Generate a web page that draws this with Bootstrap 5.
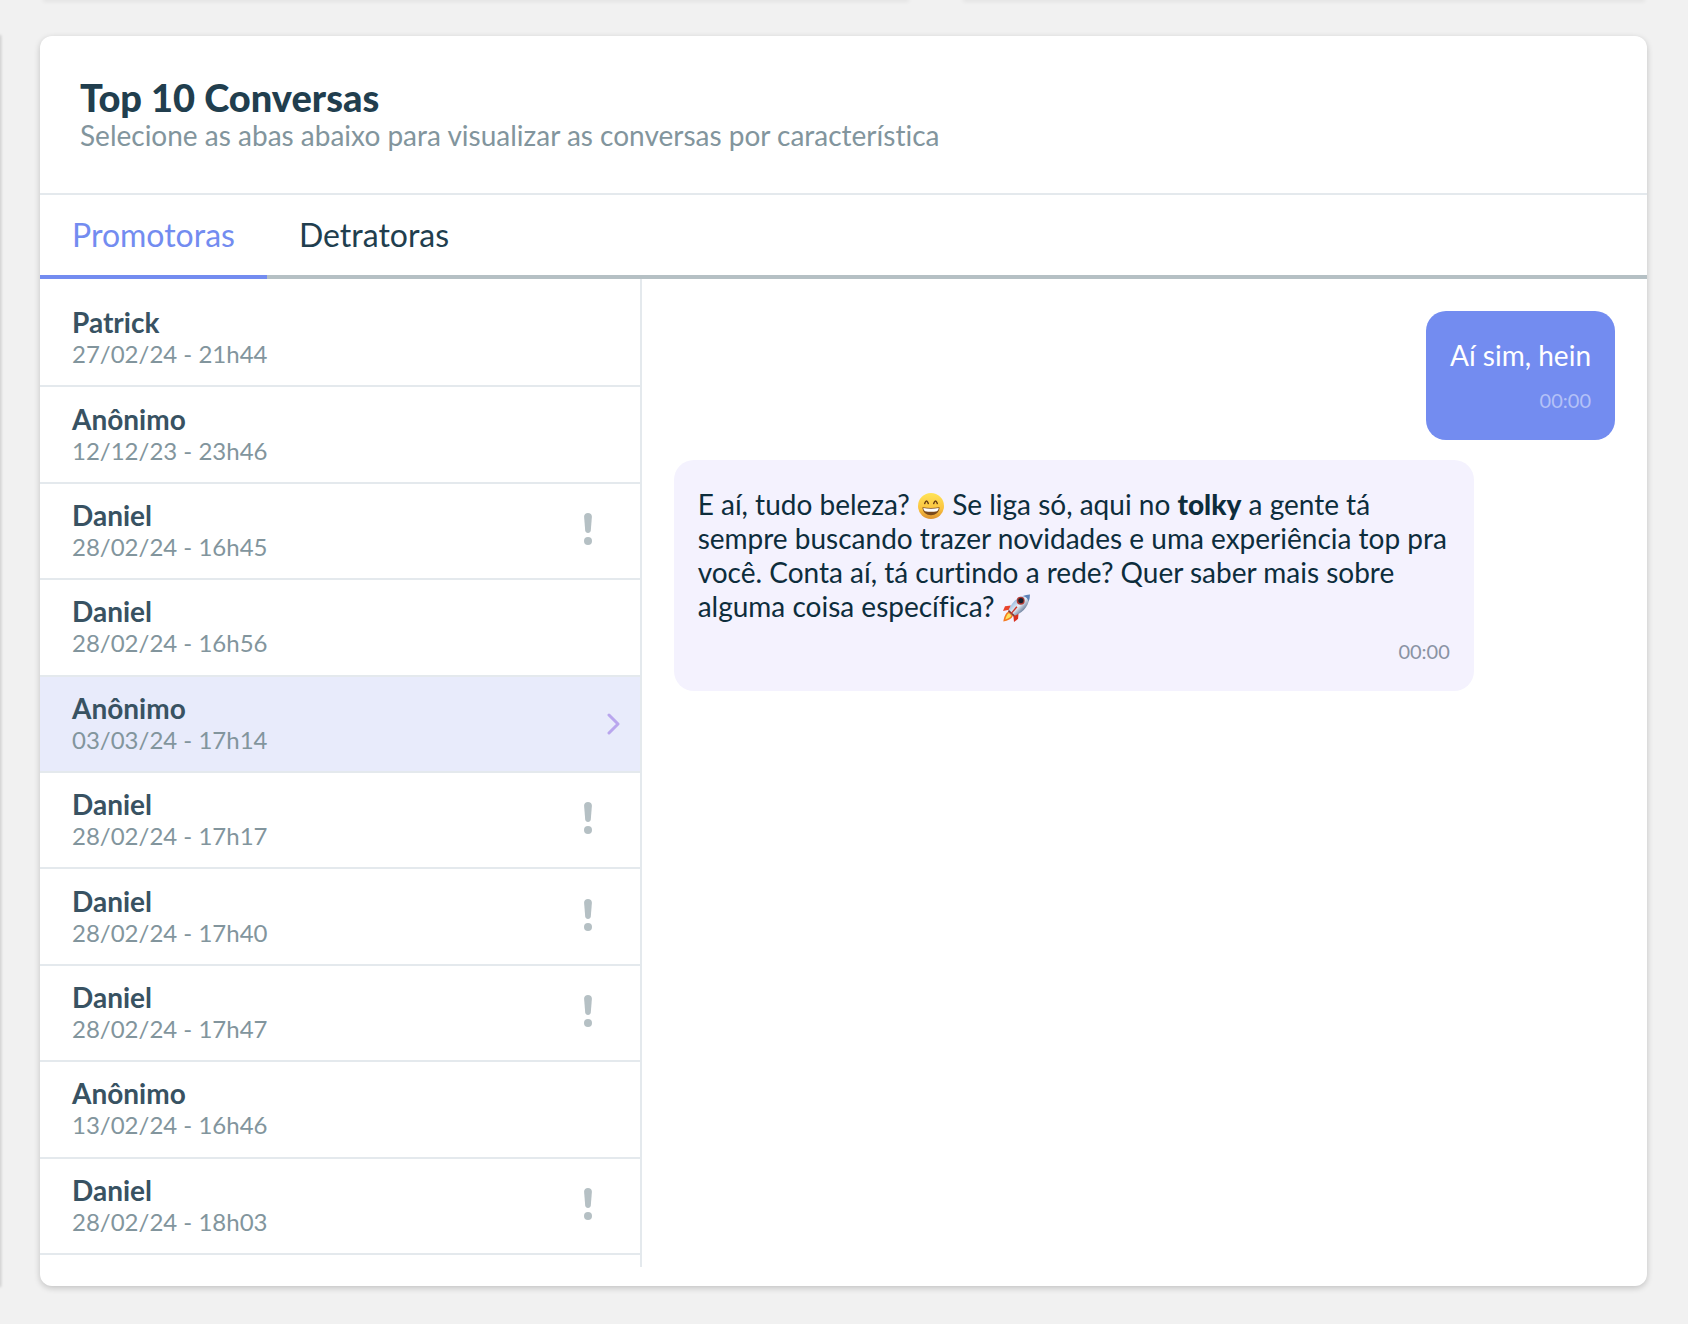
<!DOCTYPE html>
<html lang="pt-BR">
<head>
<meta charset="utf-8">
<meta name="viewport" content="width=device-width, initial-scale=1">
<title>Top 10 Conversas</title>
<link href="https://cdn.jsdelivr.net/npm/bootstrap@5.3.0/dist/css/bootstrap.min.css" rel="stylesheet">
<style>
  :root { --ink: #213e4e; --muted: #82959d; --line: #e4e9ed; --rule: #b5c0c4; --accent: #738cf0; --lift: 0 2px 6px rgba(0,0,0,.2); }
  body { font-family: Lato, "Open Sans", sans-serif; font-variant-ligatures: none; background: #f1f1f1; color: var(--ink); overflow-x: hidden; }
  /* edges of the neighbouring dashboard cards */
  .edge-row { gap: 56px; padding: 0 44px; }
  .edge-row div { height: 0; box-shadow: 0 0 4px 1px rgba(0,0,0,.12); }
  .edge-wide { flex: 0 0 54%; }
  .edge-side { width: 0; box-shadow: 0 0 3px 1px rgba(0,0,0,.2); }
  .board { padding: 36px 0 38px; }
  .panel-card { margin: 0 41px 0 40px; border: 0; border-radius: 12px; box-shadow: var(--lift); }
  .panel-head { padding: 40px 40px 41px; border-bottom: 2px solid var(--line); }
  .panel-title { font-size: 38px; line-height: 42px; font-weight: 900; }
  .panel-sub { font-size: 28px; line-height: 34px; color: var(--muted); }
  .tab-bar { border-bottom: 4px solid var(--rule); }
  .tab-bar .nav-link { font-size: 32px; line-height: 40px; padding: 20px 32px; color: var(--ink); border: 0; border-bottom: 4px solid transparent; border-radius: 0; margin-bottom: -4px; }
  .tab-bar .nav-link.active { color: var(--accent); border-bottom-color: var(--accent); background: none; }
  .split-pane { margin-bottom: 19px; }
  .talk-list { flex: 0 0 calc(37.5% - 1px); padding: 12px 0; border-right: 2px solid var(--line); }
  .talk-row { padding: 15px 20px 15px 32px; border: 0; border-bottom: 2px solid var(--line); background: none; }
  .talk-row.active { background: #e8ebfb; }
  .talk-name { font-size: 28px; line-height: 32px; font-weight: 700; color: #385262; }
  .talk-date { font-size: 24px; line-height: 32px; color: var(--muted); }
  .icon-alert { margin-right: 28px; }
  .chat-pane { padding: 32px; gap: 20px; }
  .bubble { max-width: 85%; padding: 27px 24px 28px; border-radius: 20px; font-size: 28px; line-height: 34px; background: #f4f2fe; color: #0d2d3c; }
  .bubble strong { font-weight: 900; }
  .bubble-user { background: var(--accent); color: #fff; }
  .bubble time { font-size: 20px; line-height: 24px; margin-top: 16px; color: #8a93a4; }
  .bubble-user time { color: #b4c1f7; }
  .emoji { width: 28px; height: 28px; vertical-align: -5px; }
</style>
</head>
<body class="d-flex flex-column min-vh-100">
<div class="edge-row d-flex"><div class="edge-wide"></div><div class="flex-fill"></div></div>
<main class="board d-flex flex-fill">
  <div class="edge-side"></div>
  <section class="panel-card card flex-fill">
    <header class="panel-head">
      <h1 class="panel-title m-0">Top 10 Conversas</h1>
      <p class="panel-sub m-0">Selecione as abas abaixo para visualizar as conversas por característica</p>
    </header>
    <nav class="tab-bar nav">
      <a class="nav-link active" href="#promotoras" aria-current="page">Promotoras</a>
      <a class="nav-link" href="#detratoras">Detratoras</a>
    </nav>
    <div class="split-pane d-flex flex-fill">
      <div class="talk-list d-flex flex-column">
        <button type="button" class="talk-row d-flex flex-fill align-items-center text-start"><span class="flex-fill"><span class="talk-name d-block">Patrick</span><span class="talk-date d-block">27/02/24 - 21h44</span></span></button>
        <button type="button" class="talk-row d-flex flex-fill align-items-center text-start"><span class="flex-fill"><span class="talk-name d-block">Anônimo</span><span class="talk-date d-block">12/12/23 - 23h46</span></span></button>
        <button type="button" class="talk-row d-flex flex-fill align-items-center text-start"><span class="flex-fill"><span class="talk-name d-block">Daniel</span><span class="talk-date d-block">28/02/24 - 16h45</span></span><svg class="icon-alert" width="8" height="36" viewBox="0 0 8 36" aria-hidden="true"><use href="#alert"/></svg></button>
        <button type="button" class="talk-row d-flex flex-fill align-items-center text-start"><span class="flex-fill"><span class="talk-name d-block">Daniel</span><span class="talk-date d-block">28/02/24 - 16h56</span></span></button>
        <button type="button" class="talk-row active d-flex flex-fill align-items-center text-start"><span class="flex-fill"><span class="talk-name d-block">Anônimo</span><span class="talk-date d-block">03/03/24 - 17h14</span></span><svg width="13" height="22" viewBox="0 0 13 22" fill="none" stroke="#b9a6ee" stroke-width="3" stroke-linecap="round" stroke-linejoin="round" aria-hidden="true"><path d="M2 2l9 9-9 9"/></svg></button>
        <button type="button" class="talk-row d-flex flex-fill align-items-center text-start"><span class="flex-fill"><span class="talk-name d-block">Daniel</span><span class="talk-date d-block">28/02/24 - 17h17</span></span><svg class="icon-alert" width="8" height="36" viewBox="0 0 8 36" aria-hidden="true"><use href="#alert"/></svg></button>
        <button type="button" class="talk-row d-flex flex-fill align-items-center text-start"><span class="flex-fill"><span class="talk-name d-block">Daniel</span><span class="talk-date d-block">28/02/24 - 17h40</span></span><svg class="icon-alert" width="8" height="36" viewBox="0 0 8 36" aria-hidden="true"><use href="#alert"/></svg></button>
        <button type="button" class="talk-row d-flex flex-fill align-items-center text-start"><span class="flex-fill"><span class="talk-name d-block">Daniel</span><span class="talk-date d-block">28/02/24 - 17h47</span></span><svg class="icon-alert" width="8" height="36" viewBox="0 0 8 36" aria-hidden="true"><use href="#alert"/></svg></button>
        <button type="button" class="talk-row d-flex flex-fill align-items-center text-start"><span class="flex-fill"><span class="talk-name d-block">Anônimo</span><span class="talk-date d-block">13/02/24 - 16h46</span></span></button>
        <button type="button" class="talk-row d-flex flex-fill align-items-center text-start"><span class="flex-fill"><span class="talk-name d-block">Daniel</span><span class="talk-date d-block">28/02/24 - 18h03</span></span><svg class="icon-alert" width="8" height="36" viewBox="0 0 8 36" aria-hidden="true"><use href="#alert"/></svg></button>
      </div>
      <div class="chat-pane d-flex flex-column flex-fill align-items-start">
        <div class="bubble bubble-user align-self-end">Aí sim, hein<time class="d-block text-end">00:00</time></div>
        <div class="bubble">E aí, tudo beleza?
          <svg class="emoji" viewBox="0 0 28 28" role="img" aria-label="sorriso"><circle cx="14" cy="14" r="13" fill="url(#face)"/><path d="M7.700 11.500q1.800-5 3.600 0M16.700 11.500q1.800-5 3.600 0" fill="none" stroke="#6b3f12" stroke-width="1.500" stroke-linecap="round"/><path d="M5.500 15.200q8.500 1.600 17 0c0 5-3.700 8-8.500 8s-8.500-3-8.500-8z" fill="#7b4a1c"/><path d="M6.300 16q7.700 1.400 15.400 0-.2 2.600-1.700 3.200-6 1-12 0-1.500-.6-1.700-3.200z" fill="#fff"/></svg>
          Se liga só, aqui no <strong>tolky</strong> a gente tá sempre buscando trazer novidades e uma experiência top pra você. Conta aí, tá curtindo a rede? Quer saber mais sobre alguma coisa específica?
          <svg class="emoji" viewBox="0 0 28 28" role="img" aria-label="foguete"><path d="M9 11.500L3 12.200 1 17l6-1.300z" fill="#e8432c"/><path d="M16.500 19l-.4 5.800L12 28l-.6-6z" fill="#d9301f"/><path d="M6.500 17.500C3.500 19 2 23 1.300 27.500 6 26.800 9.500 25 11 21.800z" fill="#f47a1f"/><path d="M7 19c-2 1.300-3 4-3.700 6.500C6 25 8.300 23.600 9.400 21.600z" fill="#ffe25a"/><path d="M6.300 17.500C9 8 16 1.500 28 .5 27.500 12 20.500 19.300 11.300 22.300z" fill="url(#hull)"/><path d="M21 1.900Q24.300.7 28 .5q-.2 3.800-1.300 7Q25.500 3.300 21 1.900z" fill="#5d83b8"/><path d="M5.800 17.300l5.700 5.300 1.500-1-6-5.700z" fill="#8c3a31"/><circle cx="18.700" cy="6.800" r="4" fill="#b23b34"/><circle cx="18.900" cy="6.600" r="2.600" fill="#16202d"/><path d="M15.500 13.300L9.500 20l-.9-.8 5.700-6.900z" fill="#c9352b"/></svg>
          <time class="d-block text-end">00:00</time></div>
      </div>
    </div>
  </section>
</main>
<svg width="0" height="0" class="position-absolute" aria-hidden="true">
  <defs>
    <linearGradient id="face" x1="0" y1="0" x2="0" y2="1"><stop offset="0" stop-color="#ffe457"/><stop offset=".6" stop-color="#fbc440"/><stop offset="1" stop-color="#dd9230"/></linearGradient>
    <linearGradient id="hull" x1="0" y1="0" x2="1" y2="1"><stop offset=".25" stop-color="#8fb2da"/><stop offset=".5" stop-color="#e9f1fa"/><stop offset=".75" stop-color="#5a6f8f"/></linearGradient>
    <g id="alert" fill="#b5c0c4"><path d="M4 0c2.300 0 4 1.500 3.900 3.800L6.800 17.600C6.600 19.300 5.600 20 4 20s-2.600-.7-2.800-2.400L.1 3.800C0 1.500 1.700 0 4 0z"/><circle cx="4" cy="28" r="4"/></g>
  </defs>
</svg>
<script src="https://cdn.jsdelivr.net/npm/bootstrap@5.3.0/dist/js/bootstrap.bundle.min.js"></script>
</body>
</html>
